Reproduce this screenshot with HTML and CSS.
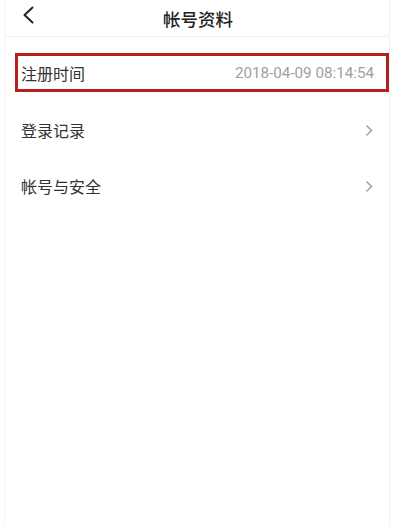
FILE: index.html
```html
<!DOCTYPE html>
<html lang="zh-CN">
<head>
<meta charset="utf-8">
<title>帐号资料</title>
<link rel="stylesheet" href="styles.css">
</head>
<body>
<div class="frame">
  <header class="topbar">
    <span class="back">
      <svg width="12" height="18" viewBox="0 0 12 18"><path d="M10.5 1.5 L2.5 9 L10.5 16.5" fill="none" stroke="#222" stroke-width="2" stroke-linecap="round" stroke-linejoin="round"/></svg>
    </span>
    <h1 class="title">帐号资料</h1>
  </header>
  <div class="list">
    <div class="row row-hl">
      <span class="label">注册时间</span>
      <span class="value">2018-04-09 08:14:54</span>
    </div>
    <div class="row row-link">
      <span class="label">登录记录</span>
      <svg class="chev" width="8" height="13" viewBox="0 0 8 13"><path d="M1.5 1.5 L6.5 6.5 L1.5 11.5" fill="none" stroke="#999" stroke-width="1.4"/></svg>
    </div>
    <div class="row row-link">
      <span class="label">帐号与安全</span>
      <svg class="chev" width="8" height="13" viewBox="0 0 8 13"><path d="M1.5 1.5 L6.5 6.5 L1.5 11.5" fill="none" stroke="#999" stroke-width="1.4"/></svg>
    </div>
  </div>
</div>
</body>
</html>
```
FILE: styles.css
```css
html, body {
  margin: 0;
  padding: 0;
  background: #fff;
}
body {
  font-family: Roboto, "Noto Sans CJK SC", sans-serif;
  color: #333;
}
.frame {
  margin: 0 10px 0 4px;
  height: 525px;
  border-left: 1px solid #f4f4f4;
  border-right: 1px solid #f2f2f2;
  box-sizing: border-box;
}
.topbar {
  height: 36px;
  border-bottom: 1px solid #f1f1f1;
  display: flex;
  align-items: center;
  justify-content: center;
  position: relative;
}
.back {
  position: absolute;
  left: 17px;
  top: 6px;
  display: flex;
}
.title {
  margin: 0;
  font-size: 17.5px;
  font-weight: 500;
  color: #222;
  font-family: "Noto Sans CJK SC", sans-serif;
  position: relative;
  left: 1px;
}
.list {
  padding-top: 16px;
}
.row {
  display: flex;
  align-items: center;
  justify-content: space-between;
}
.label {
  font-size: 16px;
  color: #333;
  font-family: "Noto Sans CJK SC", sans-serif;
}
.row-hl {
  margin-left: 10px;
  margin-right: 0;
  height: 39px;
  border: 3px solid #b3201f;
  box-sizing: border-box;
  padding: 0 12px 0 3px;
}
.value {
  font-size: 15.2px;
  color: #a0a0a0;
  font-family: Roboto, sans-serif;
}
.row-link {
  height: 56px;
  padding: 0 16px 0 16px;
}
.row-hl + .row-link {
  margin-top: 10px;
}
.chev {
  display: block;
}
```
